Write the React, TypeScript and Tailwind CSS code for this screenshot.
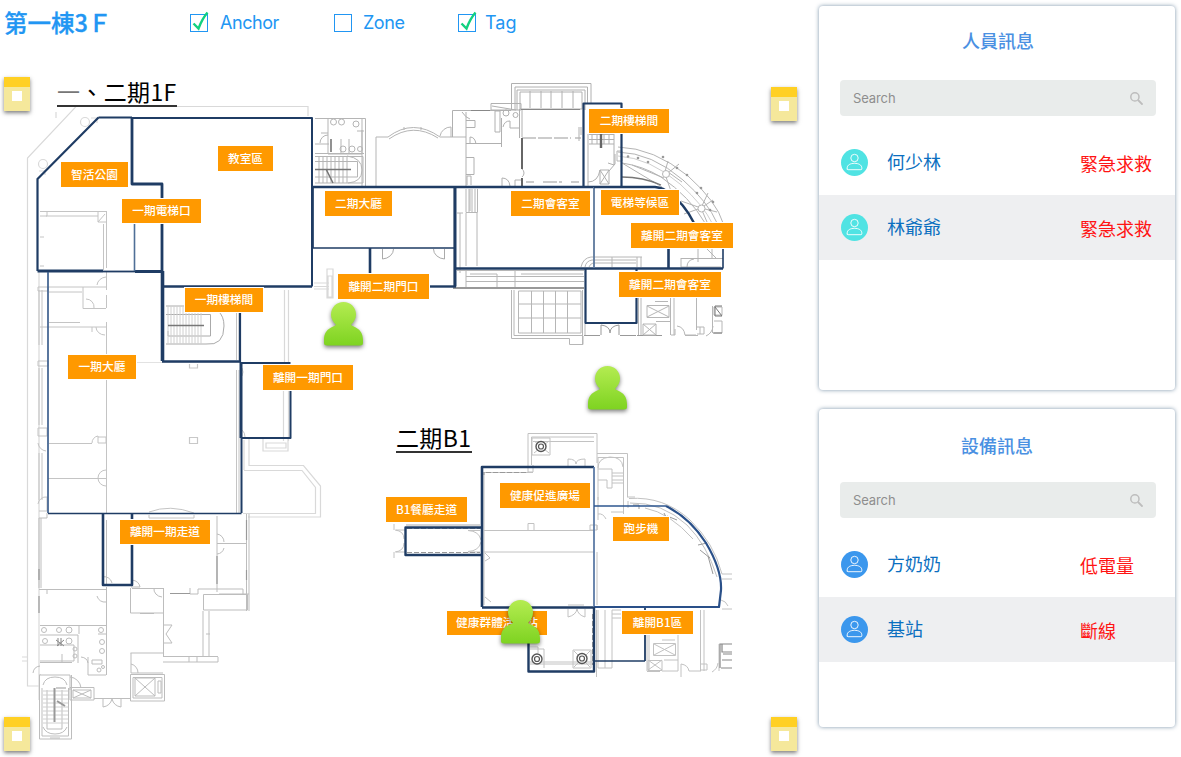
import { useState } from "react";

type Spot = { x: number; y: number };
type Label = Spot & { w: number; h: number; text: string };
type Row = { name: string; status: string };

const LABELS: Label[] = [
  { x: 61, y: 162, w: 67, h: 25, text: "智活公園" },
  { x: 218, y: 146, w: 55, h: 25, text: "教室區" },
  { x: 122, y: 199, w: 79, h: 24, text: "一期電梯口" },
  { x: 589, y: 109, w: 80, h: 24, text: "二期樓梯間" },
  { x: 325, y: 191, w: 67, h: 25, text: "二期大廳" },
  { x: 511, y: 191, w: 79, h: 25, text: "二期會客室" },
  { x: 601, y: 190, w: 78, h: 25, text: "電梯等候區" },
  { x: 631, y: 223, w: 102, h: 25, text: "離開二期會客室" },
  { x: 619, y: 272, w: 102, h: 25, text: "離開二期會客室" },
  { x: 338, y: 274, w: 91, h: 25, text: "離開二期門口" },
  { x: 185, y: 288, w: 78, h: 24, text: "一期樓梯間" },
  { x: 68, y: 355, w: 68, h: 24, text: "一期大廳" },
  { x: 263, y: 365, w: 90, h: 25, text: "離開一期門口" },
  { x: 120, y: 520, w: 90, h: 24, text: "離開一期走道" },
  { x: 500, y: 483, w: 90, h: 25, text: "健康促進廣場" },
  { x: 386, y: 497, w: 81, h: 25, text: "B1餐廳走道" },
  { x: 613, y: 517, w: 56, h: 24, text: "跑步機" },
  { x: 447, y: 611, w: 100, h: 24, text: "健康群體活動站" },
  { x: 622, y: 611, w: 71, h: 23, text: "離開B1區" },
];

const ANCHORS: Spot[] = [
  { x: 4, y: 77 },
  { x: 771, y: 87 },
  { x: 4, y: 717 },
  { x: 771, y: 717 },
];

const PEOPLE: Spot[] = [
  { x: 323, y: 301 },
  { x: 587, y: 365 },
  { x: 500, y: 599 },
];

const CJK = "font-['Noto_Sans_CJK_TC',sans-serif]";

function FloorPlan() {
  return (
    <svg className="block h-[757px] w-[810px]" viewBox="0 0 810 757" fill="none">
      {/* outer walls, faint */}
      <g stroke="#d9d9d9" strokeWidth="1.2">
        <path d="M308 116V106.500H76L27.500 158V686H40" />
        <path d="M39 272V700M56 112V118" />
        <circle cx="85" cy="122" r="4.500" />
        <circle cx="43" cy="164" r="4.500" />
        <path d="M91 118h6v5M39 171h6v4" />
        <path d="M284.500 290V362M288.500 290V362M283.500 391V441M288.500 391V441" />
        <path d="M263 438v13h25v-13M266 443h20v5h-20z" />
        <path d="M244 470.500H302L315.500 487.500V513.500H243M249 438V465.500H303.500L320.500 486V517H248M244 440V470" />
        <path d="M314 283h15M314 286.500h15M314 289h15" />
        <path d="M327 269h6v29h-6zM328 276h4v21h-4z" />
        <path d="M22 657h5M22 661h5" />
        <path d="M189.500 364v4h8v-4M189.500 437.500h8v6h-8z" stroke="#c8c8c8" />
        <path d="M106 362.500H241" stroke="#e2e2e2" />
      </g>

      {/* south-west wing */}
      <g stroke="#c4c4c4" strokeWidth="1">
        <path d="M40 211.500H106M46 216H98M106.500 211V268M103.500 224V270M40 216h7v-5M98 212v10h8M98 222l7-8M40 237h4M40 266h4" />
        <path d="M106.500 272V290M48 287H106M83 287V308.500H106M106.500 295V308M49 292H82M49 322.500H80M40 327H106M106.500 322V355M106.500 379V513" />
        <path d="M97 285a10 9 0 0 1 9-8M86 299a8 8 0 0 1 8 9M92 327v5M96 327a9 8 0 0 0 9 8" />
        <path d="M49 443.500H92M92 443a7 7 0 0 1 6-7v7M98 437h8v6h-8M48 478.500H106M106 470a8 8 0 0 0 0 16" />
        <path d="M39 290V345M42 290V345M39 368V425M42 368V425M39 453V500M42 453V500M38 287h10v4H38zM38 361h10v5H38zM38 428h9v8h-9zM38 443a9 9 0 0 0 8 8M38 504a8 8 0 0 1 9-7v14h-8" />
        <path d="M236.500 312V360M239 312V360M236.500 370V513M239 370V513" />
        <path d="M242 368a9 9 0 0 1 0 8M242 430a9 9 0 0 1 3 7" />
        <path d="M149 512Q170 504 194 513M149 515v3h45v-3" />
      </g>
      <g stroke="#bdbdbd" strokeWidth="1">
        <path d="M39 518V588M41 518V588M39 589.500H106M47 513v5h-8M47 594v-5M106.500 587V675M106.500 520V585" />
        <path d="M217 516V592M246.500 514V611M249 514V611M217 543.500h30M217 534a8 8 0 0 1 7 8M217 554a8 8 0 0 0 7-6M219 594h30M190 588v6h8v-5h45v5" />
        <path d="M203.500 594.500H247.500V610H203.500zM203 611V657M209 611V657M206 634h4" />
        <path d="M132 588.500H164M130.500 588V613H163.500V588M154 588a9 8 0 0 0 8 9M140 613.500h14" />
        <path d="M163.500 613V656M164 625h8l-6 9 6 9h-8M130.500 653H164M131 653v20H163M131 664a9 9 0 0 1 7 9" />
        <path d="M163 656.500H218M163 662H218V657M189 657v5M197 657v5" />
        <path d="M97 596a8 8 0 0 0 9 6M112 583a8 8 0 0 0-10-6M132 580q7 1 8 7h-9" />
        <path d="M40 625.500H106M40 635H78V663M40 645H74V661H40M79 634V625M98 634h8M40 662.500h32M62 662v-8M81 657a8 7 0 0 1 7 6M88 657V675H106M92 660h10v4H92z" />
        <circle cx="44" cy="630" r="2.500" />
        <circle cx="59" cy="630" r="2.500" />
        <circle cx="69" cy="630" r="3" />
        <circle cx="45" cy="641" r="2.500" />
        <circle cx="69" cy="641" r="3" />
        <circle cx="101" cy="630" r="2.500" />
        <circle cx="102" cy="642" r="2.500" />
        <circle cx="102" cy="651" r="2.500" />
        <circle cx="75" cy="649" r="2" />
        <circle cx="75" cy="656" r="2" />
        <circle cx="99" cy="670" r="2" />
        <circle cx="103" cy="667" r="1.500" />
        <path d="M56 640l8 6M64 640l-7 6M58 638v8M61 638v8" stroke="#888" />
        <path d="M33 673a8 8 0 0 1 7-7M40 674V675H70V690" />
        <path d="M39.500 675V739H71.500V675M42 688V736H68.500V688M43 685Q45 677 55 677T67 685M47 690V729H62V690M43 727Q46 734 55 734T67 727M50 738h10" />
        <path d="M43 691h25M43 695h25M43 699h25M43 703h25M43 707h25M43 711h25M43 715h25M43 719h25M43 723h25" stroke="#d0d0d0" />
        <path d="M70 677a12 12 0 0 1 11 11M70 687.500h24V700H70zM73 690h18v8H73zM73 690l18 8M91 690l-18 8" />
        <path d="M94 698.500h36M103 698v9a11 11 0 0 0 9-8 11 11 0 0 0 9 8v-9" />
        <path d="M130.500 674.500H164.500V701H130.500zM133 677.500h29V698h-29zM135 678h20v18h-20zM135 678l20 18M155 678l-20 18M158 681h3v12h-3z" />
      </g>
      <path d="M54.500 688V722M65 706l-8-5" stroke="#999" strokeWidth="2" />
      <path d="M217 556V584M170 593.500H190M246.500 520V540M246.500 570V580M39 569V580M39 596V613M56 688h10" stroke="#999" strokeWidth="1.200" />

      {/* staircase, phase one */}
      <g stroke="#aaa" strokeWidth="1">
        <path d="M166 306H200Q224 306 224 326T206 344H166M166 314.500H210.500V336H168V331" />
        <path d="M168 306v38M171 306v38M174 306v38M177 306v38M180 306v38M183 306v38M186 306v38M189 306v38M192 306v38M195 306v38M198 306v38M201 310v34" stroke="#d0d0d0" />
        <path d="M168 325.500H204" stroke="#777" strokeWidth="1.600" />
      </g>

      {/* restrooms and stairs beside the classrooms */}
      <g stroke="#b5b5b5" strokeWidth="1">
        <path d="M315 118.500H365.500V186M315 144h14M328 118V154H362V130M341 139v14M349 139v14M357 131h7M315 153.500H364M362 118V186" />
        <circle cx="333.500" cy="122" r="3" />
        <circle cx="341.500" cy="122" r="3" />
        <circle cx="356" cy="124" r="3" />
        <circle cx="343" cy="149" r="3" />
        <circle cx="352" cy="149" r="3" />
        <circle cx="360" cy="149" r="2.500" />
        <path d="M320 143a8 8 0 0 1 8-8M321 133h7" />
        <path d="M315 156.500H363V183H315M315 161.500H357.500V177H315M347 156q15 2 15 14t-14 13" />
        <path d="M319 157v26M323 157v26M327 157v26M331 157v26M335 157v26M339 157v26M343 157v26M347 157v26" />
        <path d="M315 169.500H351M326 169l7 14M331 139v13" stroke="#777" strokeWidth="1.600" />
        <path d="M376 186V137H388Q413 118 440 137H466M389 139Q413 122 438 138M440 136a11 11 0 0 1 11-9v10M404 127v3M421 127v3" />
        <path d="M382.500 249v10a12 10 0 0 0 11-10M444.500 249v10a12 10 0 0 1-11-10" stroke="#aaa" />
      </g>

      {/* north rooms, phase two */}
      <g stroke="#b0b0b0" strokeWidth="1">
        <path d="M452.500 137V110.500H511M466 112V186M462 112q4 6 8 7M466 120.500h9v7h-9M466 143.500H502M501.500 118V147M495 111h5v21h-5zM470 144V137q5 0 6 7M466 157.500h8v17h-8M467 185v-9h4v9" />
        <path d="M491 103.500H521V110H491zM492 106l24 4M519.500 109V138M522 109V137M503 127a7 8 0 0 1 7-6v7h9M502 186v-8q7 0 8 8M515 186v-6h6" />
        <circle cx="506" cy="113" r="3" />
        <circle cx="515.500" cy="115" r="2.500" />
        <path d="M522 138H571M575 138h6M526 182h8M543 182h19M571 182h8" stroke="#999" strokeDasharray="14 2" />
        <path d="M511.500 110V83.500H591V103M515 110V87H587.500V103M517 110V90H585V110M520 92V109H582V92z" />
        <path d="M530 91V108M541 91V108M551 91V108M562 91V108M573 91V108" />
        <path d="M521 109.500H580M471 110.500H490" stroke="#888" />
        <path d="M522 138V169M522 178V186" stroke="#666" strokeWidth="2" />
        <path d="M522 169a5 5 0 0 1 0 8" />
      </g>
      <g stroke="#b0b0b0" strokeWidth="1">
        <path d="M588 134V186M614 134V165L608 163M589 134.500h25M589 139.500h25M589 144h25M592 134v10M597 134v10M604 134v10M609 134v10M588 182q10 0 12-12M600 170h9v14h-9zM600 170l9 14M609 170l-9 14M609 171l6-7v-10" />
        <path d="M601 134V148" stroke="#666" strokeWidth="2.400" />
        <path d="M579 127v14M581 127v8" />
      </g>

      {/* curved glazing */}
      <g stroke="#b4b4b4" strokeWidth="1">
        <path d="M618 147Q654 148 688 176Q717 202 723 223" />
        <path d="M618 152Q652 153 683 180Q708 202 717 223" />
        <path d="M618 156Q650 158 680 184Q704 206 712 223" stroke="#cfcfcf" />
        <path d="M622 163Q643 166 661 177Q690 197 705 223" />
        <path d="M622 163l40 24M664 175l4-14M668 173l11-9M664 178l-32-13M666 177l6 17M668 172l14 10M701 208l12-8M701 208l16 4M701 208l6 14M701 208l-20-7M701 208l-17 6M701 208l7-15" />
        <circle cx="666" cy="174" r="3.500" fill="#fff" />
        <circle cx="701.500" cy="208.500" r="3.500" fill="#fff" />
        <path d="M622 177Q643 177 661 185" stroke="#777" strokeWidth="1.300" />
        <path d="M617 151h5v10h-5z" />
        <path d="M681 258.500H723M681 267h40M698 248V262M706 248l10 10M712 248V258M687 267q0-7 7-8M681 258v9" />
      </g>
      <g fill="#999">
        <circle cx="638" cy="158" r="1.300" />
        <circle cx="648" cy="162" r="1.300" />
        <circle cx="663" cy="157" r="1.300" />
        <circle cx="677" cy="168" r="1.300" />
        <circle cx="687" cy="175" r="1.300" />
        <circle cx="701" cy="188" r="1.300" />
        <circle cx="697" cy="193" r="1.300" />
        <circle cx="710" cy="210" r="1.300" />
        <circle cx="713" cy="202" r="1.300" />
        <circle cx="628" cy="156.500" r="1.300" />
      </g>

      {/* lobby furniture, planter boxes and terraces */}
      <g stroke="#b6b6b6" strokeWidth="1">
        <path d="M466 189V212.500H477.500V189M469 189v23M472 189v23M475 189v23M466 213V266M477 213V266M460 213v60M457 213h6M470 189v22" />
        <path d="M581 267q2-9 10-10h46v10M585 267q1-6 7-7h44M589 267q1-3 4-4h43M612 257v10M641 257v10M637 257h5" />
        <path d="M457 270.500H584M466 276.500H584M466 281.500H584M466 270v17M470 274h27v13M515 270v17M521 274h62" />
        <path d="M453 288H584" stroke="#999" strokeWidth="2.200" />
        <path d="M511.500 290V338.500H569.500V344.500H583V336M514 290V335.500H583M518.500 291V333H581V291zM531.500 291V333M543.500 291V333M555.500 291V333M567.500 291V333M518 304H581M518 318H581" />
        <path d="M582.500 290V345M585 324V335" />
        <path d="M584 335.500H600M620 335.500H636M601 335v-10q9 1 9 8q0-7 9-8v10M637 335.500h25" stroke="#999" />
        <path d="M638.500 297V335M641 297V335M647 305.500h22v12h-22zM647 306l22 11M669 306l-22 11M655 301.500h13M643 324h13v11h-13zM643 324l13 11M656 324l-13 11M670.500 297V335M674 297V335M656 321.500H671M696.500 297V330M677 326q7 1 8 9h11M671 335h4v-6M697 327h7v7h-7M700 327v7M706 336a12 12 0 0 0 7-10M712.500 306V333M714 307h8v8h-8zM714 321h8v12h-8M685 335.500H698" />
        <path d="M722 306h-7v10h7M713 333h9M715 307l7 9" stroke="#777" />
      </g>
      <path d="M454 188V286" stroke="#aaa" strokeWidth="1" />

      {/* basement */}
      <g stroke="#c2c2c2" strokeWidth="1">
        <path d="M528 465V433.500H597V463M531.500 465V437H594M533 441.500H594M532 438h18v17h-18zM568 466v-7q8 0 8 5q0-5 9-5v7M534 441l15 12M549 441l-15 12" />
        <path d="M597 453.500H627.500V497M598 457.500H623.500V514M598 457V500M598 468q0-10 12-11 12 0 13 10M598 469h14v19h-5v-8h-9M612 473h11M612 476h11M612 480h11M612 483h11M598 497v23M598 514q5-1 8 5M611 512h12M627 497h8" />
        <path d="M629 498.500Q664 496 690 520Q714 543 722 574H732M630 503Q662 502 687 525Q707 545 717 577M722 579H732M628 501V508M645 508q25 5 48 31M728 606a10 10 0 0 0-7-6" />
        <path d="M633 505h6v4M664 513l5 10M667 516l10 4M698 545l9-2M700 550l10 8M708 556l5 18" stroke="#999" />
        <path d="M484 472.500H533M484 530.500H594M484 552H594M484 472V605M528 523.500h6v7h-6zM528 465v7h5v-7M590 525h7v5h-7zM597 530V525M597 552V605" />
        <path d="M394 524v6M394 552v6M395 530q9 1 9 9M395 552q9-1 9-9M405 530h-9M405 552h-9M468 530.500h12M468 552h12M481 540q-2-9-13-9.500M481 542q-2 9-13 9.500" />
        <path d="M406 525H480" stroke="#aaa" />
        <path d="M485 553l5 5-5 3M485 597l6 5M568 609v8q8-2 9-8 1 6 8 8v-8M568 605h16" />
        <path d="M530 664H594M530 662H594M530 649h14v19M530 647h8v6M573 650h18v18h-18zM574 651l16 16M590 651l-16 16" />
        <path d="M596.500 610V677M598 610V668H612V610M605 610V668M612 610h9M612 614h9M612 618h9" />
        <path d="M647 635V671M649 635V671M653.500 643.500h22v12h-22zM654 644l21 11M675 644l-21 11M662 640h13M648 660.500h14v10h-14zM648 660l14 10M662 660l-14 10M662 671h16V635M678 660h-14M700.500 610V671M704 610V671M681 677V664q7 1 8 7h12M701 664h6v6h-6M712 672a12 12 0 0 0 6-9M719 644v27M647 671.500H660M722 609H732" />
        <path d="M732 644h-12v24M722 644v8h10M723 654h9M721 668h11M722 660h10" stroke="#888" strokeWidth="1.200" />
      </g>
      <path d="M484 472V475M486 472.500H528M407 528.500H480M407 552.500H480M592.500 614V665" stroke="#999" strokeDasharray="5 2" />
      {[
        [541, 446.5],
        [537, 659],
        [582, 658.5],
      ].map(([cx, cy]) => (
        <g key={`${cx}-${cy}`} stroke="#555">
          <circle cx={cx} cy={cy} r="5" fill="#fff" strokeWidth="1.400" />
          <circle cx={cx} cy={cy} r="2.500" strokeWidth="1.200" />
        </g>
      ))}

      {/* monitored zones */}
      <g stroke="#1f3c64" strokeWidth="2" strokeLinejoin="round">
        <path d="M98.500 117.500H132M98.500 117.500L37.500 179V271" strokeWidth="2.200" />
        <path d="M37.500 271H103M135 271.500H162" strokeWidth="3" />
        <path d="M103 271.500H135" strokeWidth="1.800" />
        <path d="M132 117V184H162V271" strokeWidth="2.800" />
        <path d="M132 118H312V286.500" />
        <path d="M312 286.500H162" strokeWidth="2.600" />
        <path d="M134.500 223V271" strokeWidth="1.600" stroke="#4f6f97" />
        <path d="M162.500 271V361" strokeWidth="3.600" />
        <path d="M162 361.500H241" strokeWidth="2.400" />
        <path d="M240 287V362" strokeWidth="2.200" />
        <path d="M48 272V513" strokeWidth="1.700" stroke="#3d5f8d" />
        <path d="M48 513.500H241.500" strokeWidth="1.700" />
        <path d="M241 362V438" strokeWidth="3" />
        <path d="M241.500 438V513" strokeWidth="2" />
        <path d="M241 363H290.500M290.500 390V438H241" />
        <path d="M103 514V585H132V514" strokeWidth="2.600" />
        <path d="M313 187H594" strokeWidth="2.400" />
        <path d="M313 187V248H455" strokeWidth="1.700" />
        <path d="M455 187V286.500" strokeWidth="3" />
        <path d="M430 286.500H456" strokeWidth="2.400" />
        <path d="M370 248V274" strokeWidth="2.600" />
        <path d="M455 268.500H723" strokeWidth="2.300" />
        <path d="M594 187V268" strokeWidth="1.800" stroke="#5c789c" />
        <path d="M583.500 187V103.500H621.500V187" strokeWidth="2.200" />
        <path d="M594 187H655Q664 188 669 193Q684 203 694 223" strokeWidth="2.400" />
        <path d="M668.500 248V268" strokeWidth="2.600" />
        <path d="M723 248V268.500" strokeWidth="1.600" />
        <path d="M585.500 269V323H636.500V269" strokeWidth="2.200" />
        <path d="M482 607V467H594" strokeWidth="2.600" />
        <path d="M482 607.500H594" strokeWidth="2.600" />
        <path d="M594 467V607" strokeWidth="1.800" stroke="#5c7ba6" />
        <path d="M482 527.500H405.500V555H482" strokeWidth="2.400" />
        <path d="M594 506H666" strokeWidth="1.500" stroke="#2c568f" />
        <path d="M666 506Q690 518 706 543Q722 570 721 590L719 607H594" strokeWidth="2.200" stroke="#2a5089" />
        <path d="M594 607V671.500H528.500V607" strokeWidth="2.400" />
        <path d="M594 661H645" strokeWidth="1.500" />
        <path d="M645 608V661" strokeWidth="1.800" />
      </g>
    </svg>
  );
}

function PersonMarker() {
  return (
    <svg className="h-[50px] w-[42px] overflow-visible drop-shadow-[0_2px_2px_rgba(0,0,0,0.5)]" viewBox="0 0 42 50">
      <defs>
        <linearGradient id="tagFill" x1="0" y1="0" x2="0" y2="1">
          <stop offset="0" stopColor="#b4ec51" />
          <stop offset="1" stopColor="#7ed321" />
        </linearGradient>
      </defs>
      <path
        fill="url(#tagFill)"
        d="M20.500 1C27.500 1 33 6.400 33 13.500C33 17.500 31 21 28.200 23.500C27.800 26 40 25.500 40 39V42Q40 44.500 37 44.500H4Q1 44.500 1 42V39C1 25.500 13.200 26 12.800 23.500C10 21 8 17.500 8 13.500C8 6.400 13.500 1 20.500 1Z"
      />
    </svg>
  );
}

function AnchorMarker() {
  return (
    <div className="flex h-[34px] w-[26px] flex-col bg-[#f5e89b] shadow-[0_2px_4px_rgba(0,0,0,0.5)]">
      <div className="h-[10px] bg-[#ffd024]" />
      <div className="mt-1 ml-2 size-[10px] bg-white" />
    </div>
  );
}

function Toggle({ label, initial, className }: { label: string; initial: boolean; className: string }) {
  const [checked, setChecked] = useState(initial);
  return (
    <button
      type="button"
      role="checkbox"
      aria-checked={checked}
      onClick={() => setChecked(!checked)}
      className={`flex items-center text-[18px] leading-[22px] text-[#2196f3] ${className}`}
    >
      <svg className="size-[18px] shrink-0 overflow-visible" viewBox="0 0 18 18" fill="none">
        <rect x="0.5" y="0.5" width="17" height="17" stroke="#2196f3" />
        {checked && <path d="M3.500 9.500L8.500 14.500Q12 5 17.500 -1.500" stroke="#12d180" strokeWidth="2.400" />}
      </svg>
      <span>{label}</span>
    </button>
  );
}

function Avatar({ className }: { className: string }) {
  return (
    <span className={`flex size-[27px] items-center justify-center rounded-full ${className}`}>
      <svg className="size-[27px]" viewBox="0 0 27 27" fill="none" stroke="#fff" strokeWidth="0.9">
        <circle cx="13.500" cy="9" r="3.700" />
        <path d="M6.200 20.500V18.800C6.200 16 9.500 14.300 13.500 14.300S20.800 16 20.800 18.800V19.800Q20.800 20.700 19.900 20.700H7.100Q6.200 20.700 6.200 19.800" />
      </svg>
    </span>
  );
}

function SearchBox() {
  return (
    <div className="mr-[19px] ml-[21px] flex h-9 items-center justify-between rounded bg-[#e9eceb] px-[13px]">
      <input
        placeholder="Search"
        className="w-40 bg-transparent pt-[2px] font-['Inter',sans-serif] text-[13px] tracking-[-0.1px] outline-none placeholder:text-[#8e8e8e]"
      />
      <svg className="size-[13px]" viewBox="0 0 13 13" fill="none" stroke="#bdbdbd" strokeWidth="1.500">
        <circle cx="4.900" cy="4.900" r="4.100" />
        <path d="M8 8l4.600 4.600" strokeWidth="1.900" />
      </svg>
    </div>
  );
}

function Panel({
  title,
  rows,
  className,
  titleClass,
  avatarClass,
}: {
  title: string;
  rows: Row[];
  className: string;
  titleClass: string;
  avatarClass: string;
}) {
  return (
    <section className={`flex w-[356px] flex-col rounded bg-white shadow-[0_0_4px_rgba(40,80,115,0.6)] ${className}`}>
      <h2 className={`text-center text-[18px] font-medium text-[#4a90e2] ${titleClass} ${CJK}`}>{title}</h2>
      <SearchBox />
      <ul className="mt-[14px]">
        {rows.map((row) => (
          <li key={row.name} className={`flex h-[65px] items-center pl-[22px] text-[18px] leading-[26px] even:bg-[#eeeff1] ${CJK}`}>
            <Avatar className={avatarClass} />
            <span className="ml-[19px] w-[193px] pb-1 text-[#0b6fc0]">{row.name}</span>
            <span className="text-[#ff1414]">{row.status}</span>
          </li>
        ))}
      </ul>
    </section>
  );
}

export default function App() {
  return (
    <div className="flex h-[757px] w-[1181px] overflow-hidden bg-white font-['Inter',sans-serif]">
      <main className="relative w-[810px] shrink-0">
        <FloorPlan />
        <header className="absolute top-0 left-0 flex h-[46px] items-center">
          <h1 className={`w-[185px] pb-[2px] pl-1 text-[23.500px] leading-[32px] font-medium whitespace-nowrap text-[#2196f3] [-webkit-text-stroke:0.3px_#2196f3] ${CJK}`}>
            第一棟3Ｆ
          </h1>
          <Toggle label="Anchor" initial className="ml-[5px] w-[144px] gap-3 tracking-[-0.450px]" />
          <Toggle label="Zone" initial={false} className="w-[124px] gap-[11px] tracking-[-0.450px]" />
          <Toggle label="Tag" initial className="gap-[9px]" />
        </header>
        <div className={`absolute top-[78px] left-[57px] flex h-[29px] w-[120px] items-center border-b-2 border-[#333] text-[23px] tracking-[0.350px] whitespace-nowrap text-black ${CJK}`}>
          <span className="text-[#777]">一</span>、二期1F
        </div>
        <div className={`absolute top-[424px] left-[396px] flex h-[29px] w-[76px] items-center border-b-2 border-[#333] text-[23px] tracking-[0.350px] whitespace-nowrap text-black ${CJK}`}>
          二期B1
        </div>
        {LABELS.map((l) => (
          <div
            key={`${l.x}-${l.y}`}
            className={`absolute flex items-center justify-center bg-[#ff9900] pb-[2px] text-[11.700px] leading-[14px] font-medium whitespace-nowrap text-white ring-1 ring-white ${CJK}`}
            style={{ left: l.x, top: l.y, width: l.w, height: l.h }}
          >
            {l.text}
          </div>
        ))}
        {ANCHORS.map((a) => (
          <div key={`${a.x}-${a.y}`} className="absolute" style={{ left: a.x, top: a.y }}>
            <AnchorMarker />
          </div>
        ))}
        {PEOPLE.map((p) => (
          <div key={`${p.x}-${p.y}`} className="absolute" style={{ left: p.x, top: p.y }}>
            <PersonMarker />
          </div>
        ))}
      </main>
      <aside className="flex flex-col gap-[19px] pt-[6px] pl-[9px]">
        <Panel
          title="人員訊息"
          className="h-[384px]"
          titleClass="h-[74px] pt-[21px] pl-[2px] leading-[27px]"
          avatarClass="bg-[#50e3e3]"
          rows={[
            { name: "何少林", status: "緊急求救" },
            { name: "林爺爺", status: "緊急求救" },
          ]}
        />
        <Panel
          title="設備訊息"
          className="h-[318px]"
          titleClass="h-[73px] pt-[23px] leading-[27px]"
          avatarClass="bg-[#3b97ed]"
          rows={[
            { name: "方奶奶", status: "低電量" },
            { name: "基站", status: "斷線" },
          ]}
        />
      </aside>
    </div>
  );
}
